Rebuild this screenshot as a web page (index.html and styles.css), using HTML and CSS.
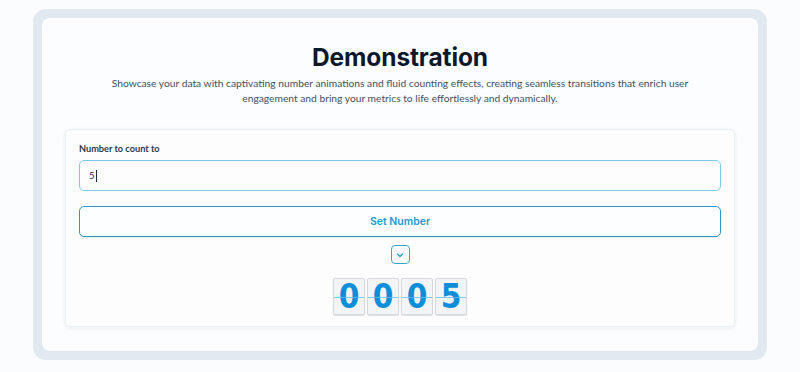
FILE: index.html
```html
<!DOCTYPE html>
<html>
<head>
<meta charset="utf-8">
<link rel="stylesheet" href="styles.css">
</head>
<body>
<div class="frame">
  <div class="panel">
    <h1 class="title">Demonstration</h1>
    <p class="desc">Showcase your data with captivating number animations and fluid counting effects, creating seamless transitions that enrich user engagement and bring your metrics to life effortlessly and dynamically.</p>
    <div class="card">
      <label class="label">Number to count to</label>
      <div class="input"><span class="value">5</span><span class="caret"></span></div>
      <button class="btn">Set Number</button>
      <div class="toggle-row">
        <span class="toggle">
          <svg width="10" height="10" viewBox="0 0 10 10"><path d="M2.5 4 L5 6.5 L7.5 4" fill="none" stroke="#1f9fcb" stroke-width="1.3" stroke-linecap="round" stroke-linejoin="round"/></svg>
        </span>
      </div>
      <div class="digits">
        <span class="digit">0</span>
        <span class="digit">0</span>
        <span class="digit">0</span>
        <span class="digit">5</span>
      </div>
    </div>
  </div>
</div>
</body>
</html>
```

FILE: styles.css
```css
html, body {
  margin: 0;
  padding: 0;
  background: #fbfcfd;
}
body {
  padding-top: 9px;
}
.frame {
  margin: 0 33px;
  width: 716px;
  height: 333px;
  border: 9px solid #e2e8f0;
  border-radius: 13px;
  background: #e2e8f0;
}
.panel {
  height: 100%;
  background: #fcfdfe;
  border-radius: 8px;
  padding: 23px 23px 0;
  box-sizing: border-box;
  display: flex;
  flex-direction: column;
  align-items: center;
}
.title {
  margin: 0;
  font-family: "Inter", "Liberation Sans", sans-serif;
  font-weight: 700;
  font-size: 24.5px;
  line-height: 32px;
  color: #0f172a;
  letter-spacing: -0.1px;
}
.desc {
  margin: 3px 0 0;
  width: 600px;
  text-align: center;
  font-family: "Lato", "Liberation Sans", sans-serif;
  font-size: 10.25px;
  line-height: 15px;
  color: #434f63;
}
.card {
  margin-top: 23px;
  width: 670px;
  box-sizing: border-box;
  background: #fdfdfe;
  border: 1px solid #eef1f4;
  border-radius: 5px;
  box-shadow: 0 1px 4px rgba(15, 23, 42, 0.08);
  padding: 13px 13px 11px;
  display: flex;
  flex-direction: column;
}
.label {
  font-family: "Lato", "Liberation Sans", sans-serif;
  font-weight: 700;
  font-size: 9.2px;
  line-height: 12px;
  color: #2d3748;
}
.input {
  margin-top: 5px;
  height: 31px;
  box-sizing: border-box;
  border: 1px solid #7cc9e6;
  border-radius: 5px;
  display: flex;
  align-items: center;
  padding-left: 9px;
  font-family: "Lato", "Liberation Sans", sans-serif;
  font-size: 9.5px;
  color: #1e293b;
}
.caret {
  display: inline-block;
  width: 1px;
  height: 12px;
  background: #1e293b;
  margin-left: 1px;
}
.btn {
  margin-top: 15px;
  height: 31px;
  box-sizing: border-box;
  border: 1.5px solid #2a9dc6;
  border-radius: 5px;
  background: #fdfeff;
  font-family: "Inter", "Liberation Sans", sans-serif;
  font-weight: 600;
  font-size: 10.5px;
  color: #1b9acb;
  box-shadow: 0 1px 1px rgba(0,0,0,0.08);
}
.toggle-row {
  display: flex;
  justify-content: center;
  margin-top: 8px;
}
.toggle {
  width: 19px;
  height: 19px;
  box-sizing: border-box;
  border: 1.5px solid #3aa5cc;
  border-radius: 4px;
  display: flex;
  align-items: center;
  justify-content: center;
}
.digits {
  margin-top: 14px;
  display: flex;
  justify-content: center;
  gap: 2px;
}
.digit {
  position: relative;
  width: 32px;
  height: 37px;
  box-sizing: border-box;
  background: #f3f4f5;
  border: 1px solid #d6d8db;
  border-radius: 2px;
  box-shadow: 0 1px 1px rgba(0,0,0,0.12);
  display: flex;
  align-items: center;
  justify-content: center;
  font-family: "DejaVu Sans Condensed", "DejaVu Sans", sans-serif;
  font-stretch: condensed;
  font-weight: 700;
  font-size: 33px;
  line-height: 35px;
  color: #0e8ed8;
}
.digit::after {
  content: "";
  position: absolute;
  left: 0;
  right: 0;
  top: 50%;
  height: 1px;
  background: rgba(100, 190, 235, 0.8);
}
```
